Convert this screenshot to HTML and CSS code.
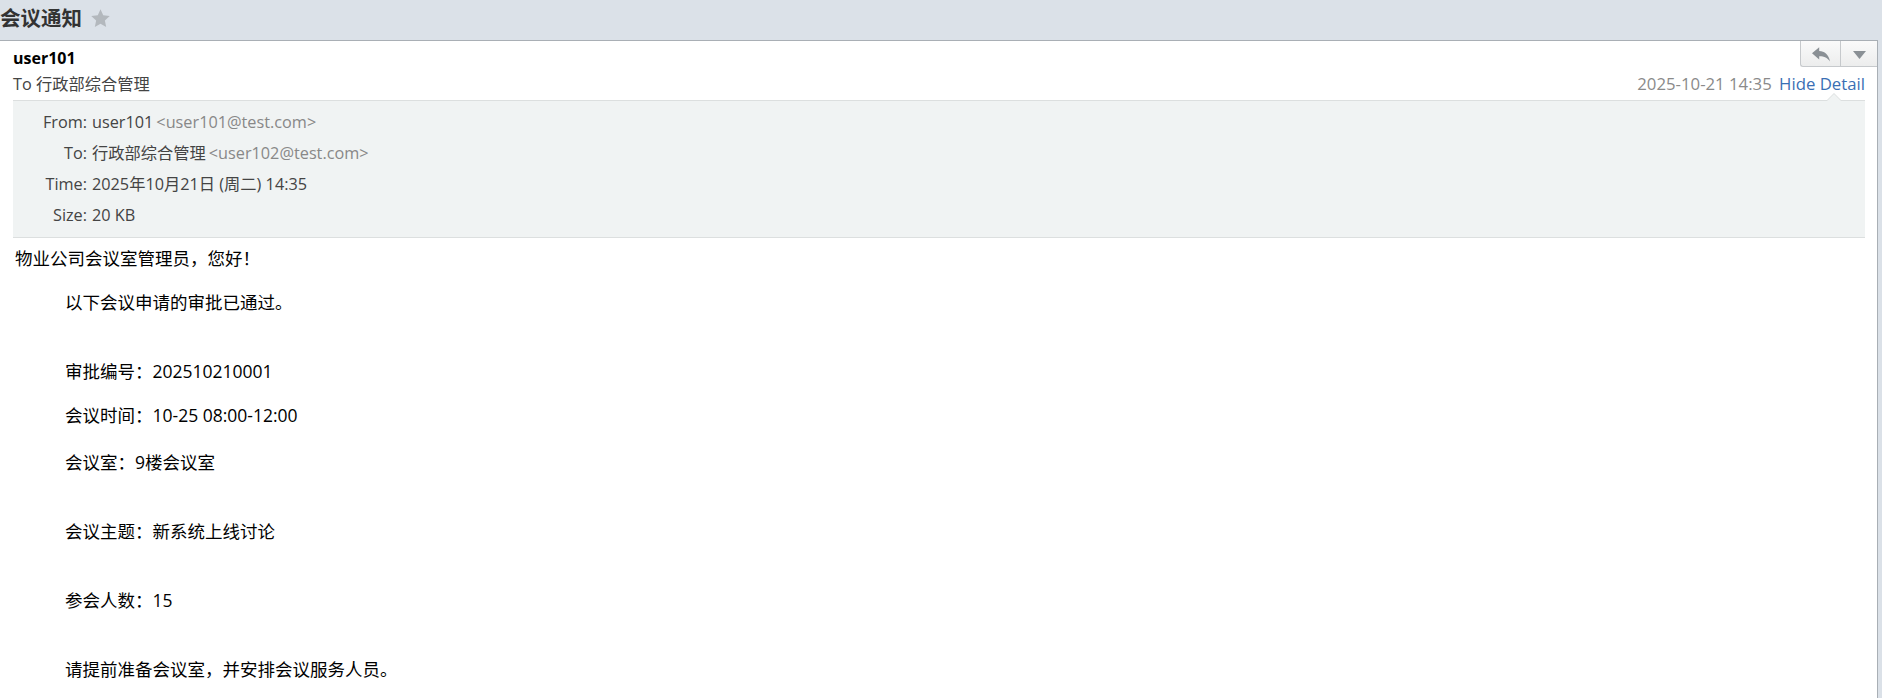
FILE: index.html
```html
<!DOCTYPE html>
<html lang="zh-CN">
<head>
    <meta charset="UTF-8">
    <title>会议通知</title>
    <link rel="stylesheet" href="styles.css">
</head>
<body>
    <div class="topbar">
        <h1 class="subject">会议通知</h1>
        <svg class="star" viewBox="0 0 24 24" width="21" height="21">
            <polygon points="12,1.5 15.1,8.4 22.6,9.2 17,14.3 18.5,21.7 12,17.9 5.5,21.7 7,14.3 1.4,9.2 8.9,8.4" fill="#b3b8bd"/>
        </svg>
    </div>

    <div class="mail">
        <div class="actions">
            <button class="action reply" title="Reply">
                <svg viewBox="0 0 18 15" width="18" height="15">
                    <path d="M0 6.2 L7.2 0.3 V4 C12.6 4.2 16.8 7.4 18 14.6 C15.6 10.9 12.5 9.3 7.2 9.3 V12.4 Z" fill="#8a9095"/>
                </svg>
            </button>
            <button class="action more" title="More">
                <svg viewBox="0 0 13 8" width="13" height="8">
                    <polygon points="0,0 13,0 6.5,8" fill="#8a9095"/>
                </svg>
            </button>
        </div>

        <div class="mail-head">
            <div class="sender">user101</div>
            <div class="recipient-row">
                <div class="recipient">To 行政部综合管理</div>
                <div class="meta">
                    <span class="date">2025-10-21 14:35</span>
                    <a class="toggle" href="#">Hide Detail</a>
                </div>
            </div>

            <div class="details">
                <div class="detail-row">
                    <span class="label">From:</span>
                    <span class="value">user101<span class="addr">&lt;user101@test.com&gt;</span></span>
                </div>
                <div class="detail-row">
                    <span class="label">To:</span>
                    <span class="value">行政部综合管理<span class="addr">&lt;user102@test.com&gt;</span></span>
                </div>
                <div class="detail-row">
                    <span class="label">Time:</span>
                    <span class="value">2025年10月21日 (周二) 14:35</span>
                </div>
                <div class="detail-row">
                    <span class="label">Size:</span>
                    <span class="value">20 KB</span>
                </div>
            </div>
        </div>

        <div class="mail-body">
            <p class="line">物业公司会议室管理员，您好！</p>
            <p class="line indent sp-1">以下会议申请的审批已通过。</p>
            <p class="line indent sp-2">审批编号：202510210001</p>
            <p class="line indent sp-1">会议时间：10-25 08:00-12:00</p>
            <p class="line indent sp-1b">会议室：9楼会议室</p>
            <p class="line indent sp-2">会议主题：新系统上线讨论</p>
            <p class="line indent sp-2">参会人数：15</p>
            <p class="line indent sp-2">请提前准备会议室，并安排会议服务人员。</p>
        </div>
    </div>
</body>
</html>
```

FILE: styles.css
```css
html, body {
    height: 100%;
}

body {
    margin: 0;
    background-color: #dbe1e8;
    font-family: "Open Sans", "Noto Sans CJK SC", sans-serif;
    color: #000;
    display: flex;
    flex-direction: column;
    overflow: hidden;
}

.topbar {
    height: 40px;
    display: flex;
    align-items: center;
    padding-bottom: 4px;
    box-sizing: border-box;
}

.subject {
    margin: 0;
    font-size: 20.5px;
    font-weight: bold;
    color: #333;
    line-height: 24px;
}

.star {
    margin-left: 8px;
    margin-top: 1px;
}

.mail {
    flex: 1;
    position: relative;
    background-color: #fff;
    border-top: 1px solid #a9afb5;
    border-right: 1px solid #a9afb5;
    margin-right: 4px;
}

/* reply / more buttons in the top right corner */
.actions {
    position: absolute;
    top: 0;
    right: 0;
    display: flex;
    height: 25px;
    border-left: 1px solid #c6c9cc;
    border-bottom: 1px solid #c6c9cc;
    border-bottom-left-radius: 3px;
    background: linear-gradient(#fafafa, #eceded);
}

.action {
    border: none;
    background: transparent;
    padding: 0;
    margin: 0;
    display: flex;
    align-items: center;
    justify-content: center;
    cursor: pointer;
}

.reply {
    width: 40px;
    border-right: 1px solid #c6c9cc;
}

.reply svg {
    margin-top: 1px;
}

.more {
    width: 36px;
}

.more svg {
    margin-top: 3px;
}

.mail-head {
    padding: 6px 12px 0 13px;
}

.sender {
    font-size: 16px;
    font-weight: bold;
    line-height: 22px;
    color: #000;
}

.recipient-row {
    display: flex;
    justify-content: space-between;
    align-items: baseline;
    margin-top: 4px;
    line-height: 22px;
    font-size: 16.25px;
}

.recipient {
    color: #444;
}

.meta {
    font-size: 16.75px;
}

.date {
    color: #8a8a8a;
}

.toggle {
    color: #3a6fb4;
    text-decoration: none;
    margin-left: 3px;
}

.details {
    position: relative;
    margin-top: 5px;
    padding: 6px 0 6px;
    background-color: #f0f3f3;
    border-top: 1px solid #dcdfdf;
    border-bottom: 1px solid #dcdfdf;
    font-size: 16.25px;
}

/* little caret pointing at "Hide Detail" */
.details::before,
.details::after {
    content: "";
    position: absolute;
    right: 23px;
    width: 0;
    height: 0;
    border-left: 8px solid transparent;
    border-right: 8px solid transparent;
}

.details::before {
    top: -8px;
    border-bottom: 8px solid #dcdfdf;
}

.details::after {
    top: -7px;
    right: 24px;
    border-left-width: 7px;
    border-right-width: 7px;
    border-bottom: 7px solid #f0f3f3;
}

.detail-row {
    display: flex;
    line-height: 31px;
    color: #444;
}

.label {
    width: 74px;
    text-align: right;
    margin-right: 5px;
}

.addr {
    color: #888;
    margin-left: 3px;
}

.mail-body {
    padding: 9px 12px 0 15px;
    font-size: 17.5px;
    line-height: 23px;
}

.line {
    margin: 0;
}

.indent {
    padding-left: 50px;
}

.sp-1 {
    margin-top: 21px;
}

.sp-1b {
    margin-top: 24px;
}

.sp-2 {
    margin-top: 46px;
}
```
